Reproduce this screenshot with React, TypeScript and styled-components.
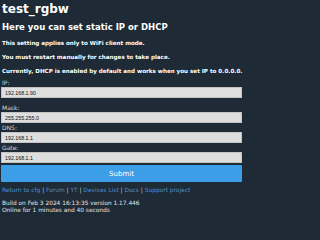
import React from "react";
import styled, { createGlobalStyle } from "styled-components";

const Global = createGlobalStyle`
  html, body { margin: 0; padding: 0; background: #1e2b36; }
  body {
    font-family: "DejaVu Sans", Verdana, sans-serif;
    color: #eaeaea;
  }
`;

const Page = styled.div`
  width: 250px;
  height: 213px;
  overflow: hidden;
  padding: 0 2px 0 1px;
  box-sizing: border-box;
`;

const Title = styled.h1`
  margin: 1px 0 0 1px;
  font-size: 12px;
  line-height: 16px;
  font-weight: bold;
  color: #ffffff;
`;

const Heading = styled.h3`
  margin: 5px 0 0 1px;
  font-size: 8.5px;
  line-height: 11px;
  font-weight: bold;
  color: #ffffff;
`;

const Note = styled.p`
  margin: 6px 0 0 1px;
  font-size: 5.6px;
  line-height: 8px;
  font-weight: bold;
  color: #ffffff;
`;

const Form = styled.form`
  display: flex;
  flex-direction: column;
  margin-top: 3px;
`;

const Label = styled.label<{ $gap?: number }>`
  font-size: 6px;
  line-height: 9px;
  margin-left: 1px;
  color: #d4d8dc;
  margin-top: ${(p) => p.$gap ?? 0}px;
`;

const Input = styled.input`
  box-sizing: border-box;
  width: 241px;
  height: 11px;
  margin: 0;
  padding: 0 3px;
  border: 1px solid #c4c4c4;
  background: #dedede;
  color: #111;
  font-family: "Liberation Sans", Arial, sans-serif;
  font-size: 5.3px;
  outline: none;
`;

const Submit = styled.button`
  box-sizing: border-box;
  width: 241px;
  height: 17px;
  margin-top: 2px;
  padding: 0;
  border: none;
  border-radius: 1px;
  background: #3c9ee6;
  color: #ffffff;
  font-family: "DejaVu Sans", Verdana, sans-serif;
  font-size: 7px;
`;

const Links = styled.div`
  margin-top: 4px;
  margin-left: 1px;
  font-size: 5.9px;
  line-height: 8px;
  color: #c8c8c8;
`;

const Link = styled.a`
  color: #4e8fd0;
  text-decoration: none;
`;

const Footer = styled.div`
  margin-top: 6px;
  margin-left: 1px;
  font-size: 5.85px;
  line-height: 6.5px;
  color: #e4e4e4;
`;

const links = ["Return to cfg", "Forum", "YT", "Devices List", "Docs", "Support project"];

export default function App() {
  return (
    <Page>
      <Global />
      <Title>test_rgbw</Title>
      <Heading>Here you can set static IP or DHCP</Heading>
      <Note>This setting applies only to WiFi client mode.</Note>
      <Note>You must restart manually for changes to take place.</Note>
      <Note>Currently, DHCP is enabled by default and works when you set IP to 0.0.0.0.</Note>
      <Form onSubmit={(e) => e.preventDefault()}>
        <Label>IP:</Label>
        <Input defaultValue="192.168.1.90" />
        <Label $gap={5}>Mask:</Label>
        <Input defaultValue="255.255.255.0" />
        <Label>DNS:</Label>
        <Input defaultValue="192.168.1.1" />
        <Label>Gate:</Label>
        <Input defaultValue="192.168.1.1" />
        <Submit type="submit">Submit</Submit>
      </Form>
      <Links>
        {links.map((l, i) => (
          <React.Fragment key={l}>
            {i > 0 && " | "}
            <Link href="#">{l}</Link>
          </React.Fragment>
        ))}
      </Links>
      <Footer>
        Build on Feb 3 2024 16:13:35 version 1.17.446
        <br />
        Online for 1 minutes and 40 seconds
      </Footer>
    </Page>
  );
}
